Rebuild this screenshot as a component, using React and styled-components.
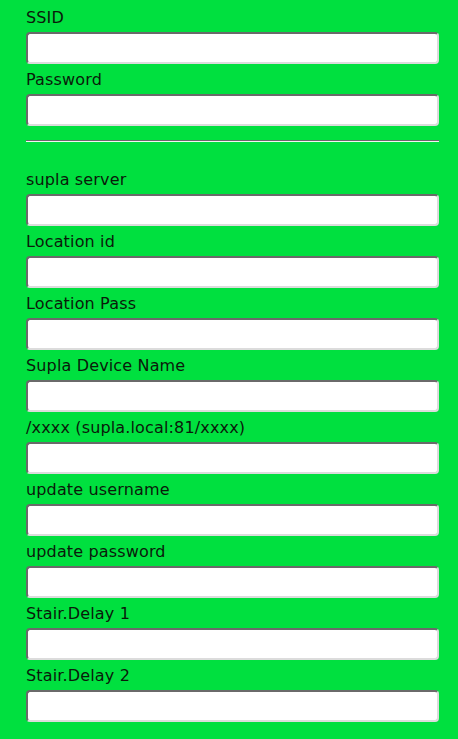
import React from "react";
import styled, { createGlobalStyle } from "styled-components";

const Global = createGlobalStyle`
  html, body { margin: 0; padding: 0; background: #00e03f; }
  body { font-family: "DejaVu Sans", Verdana, sans-serif; }
`;

const Page = styled.div`
  padding: 8px 19px 10px 26px;
  min-height: 739px;
  box-sizing: border-box;
  background: #00e03f;
`;

const Field = styled.div`
  display: flex;
  flex-direction: column;
  margin-bottom: 6px;
`;

const Label = styled.label`
  font-size: 16px;
  line-height: 19px;
  color: #0a1a0a;
  margin-bottom: 5px;
  letter-spacing: 0.15px;
`;

const Input = styled.input`
  box-sizing: border-box;
  width: 100%;
  height: 32px;
  border-style: solid;
  border-width: 2px;
  border-color: #6a6a6a #dcdcdc #dcdcdc #6a6a6a;
  border-radius: 4px;
  background: #fff;
  padding: 0 6px;
  font-family: inherit;
  font-size: 15px;
  outline: none;
`;

const Rule = styled.hr`
  margin: 14px 0 28px;
  height: 0;
  border: none;
  border-top: 1px solid #6a6a6a;
  border-bottom: 1px solid #f4f4f4;
`;

const wifi = ["SSID", "Password"];
const rest = [
  "supla server",
  "Location id",
  "Location Pass",
  "Supla Device Name",
  "/xxxx (supla.local:81/xxxx)",
  "update username",
  "update password",
  "Stair.Delay 1",
  "Stair.Delay 2",
];

export default function App() {
  return (
    <>
      <Global />
      <Page>
        {wifi.map((l) => (
          <Field key={l}>
            <Label>{l}</Label>
            <Input type={l === "Password" ? "password" : "text"} />
          </Field>
        ))}
        <Rule />
        {rest.map((l) => (
          <Field key={l}>
            <Label>{l}</Label>
            <Input type="text" />
          </Field>
        ))}
      </Page>
    </>
  );
}
